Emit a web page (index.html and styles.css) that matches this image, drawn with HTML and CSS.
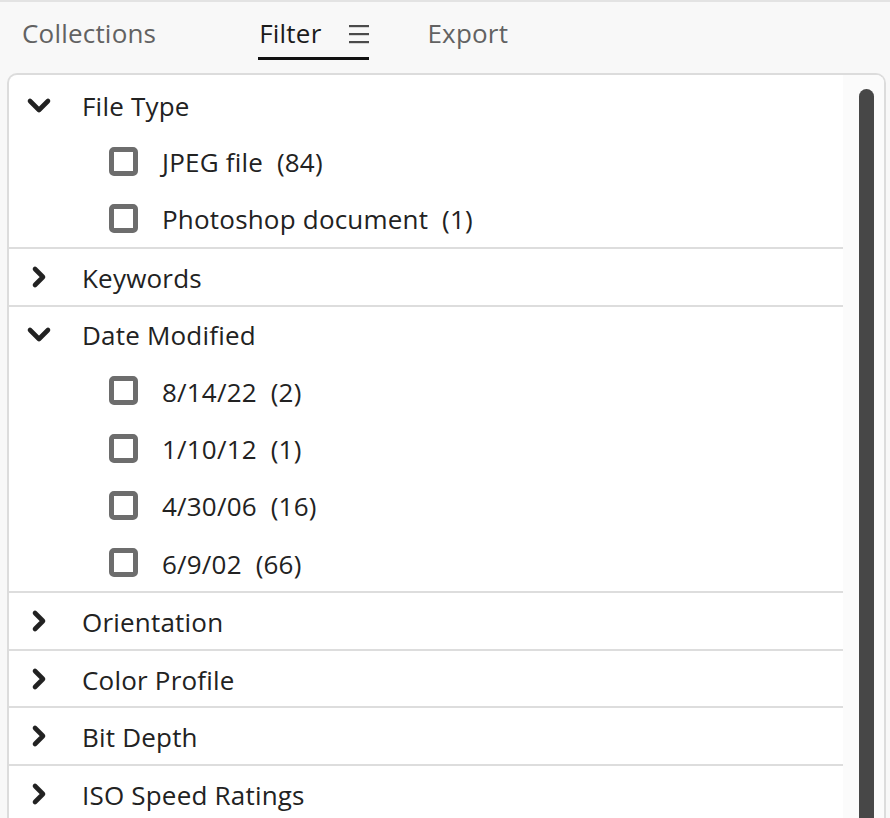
FILE: index.html
```html
<!DOCTYPE html>
<html lang="en">
<head>
<meta charset="utf-8">
<title>Filter</title>
<link rel="stylesheet" href="styles.css">
</head>
<body>
<div class="app">
  <nav class="tabs">
    <div class="tab tab-muted tab-collections">Collections</div>
    <div class="tab tab-active">
      <span>Filter</span>
      <svg class="menu-icon" width="20" height="20" viewBox="0 0 20 20" aria-hidden="true">
        <rect x="0" y="1" width="20" height="2.2" fill="#4b4b4b"/>
        <rect x="0" y="9" width="20" height="2.2" fill="#4b4b4b"/>
        <rect x="0" y="17" width="20" height="2.2" fill="#4b4b4b"/>
      </svg>
    </div>
    <div class="tab tab-muted tab-export">Export</div>
  </nav>

  <section class="panel">
    <div class="list">
      <div class="group">
        <div class="header">
          <svg class="chev" width="26" height="26" viewBox="0 0 26 26"><path d="M4 9 L13 18 L22 9" /></svg>
          <span class="title">File Type</span>
        </div>
        <div class="item"><span class="box"></span><span class="label">JPEG file&nbsp; (84)</span></div>
        <div class="item"><span class="box"></span><span class="label">Photoshop document&nbsp; (1)</span></div>
      </div>
      <div class="group">
        <div class="header">
          <svg class="chev" width="26" height="26" viewBox="0 0 26 26"><path d="M9 5 L17 13 L9 21" /></svg>
          <span class="title">Keywords</span>
        </div>
      </div>
      <div class="group">
        <div class="header">
          <svg class="chev" width="26" height="26" viewBox="0 0 26 26"><path d="M4 9 L13 18 L22 9" /></svg>
          <span class="title">Date Modified</span>
        </div>
        <div class="item"><span class="box"></span><span class="label">8/14/22&nbsp; (2)</span></div>
        <div class="item"><span class="box"></span><span class="label">1/10/12&nbsp; (1)</span></div>
        <div class="item"><span class="box"></span><span class="label">4/30/06&nbsp; (16)</span></div>
        <div class="item"><span class="box"></span><span class="label">6/9/02&nbsp; (66)</span></div>
      </div>
      <div class="group">
        <div class="header">
          <svg class="chev" width="26" height="26" viewBox="0 0 26 26"><path d="M9 5 L17 13 L9 21" /></svg>
          <span class="title">Orientation</span>
        </div>
      </div>
      <div class="group">
        <div class="header">
          <svg class="chev" width="26" height="26" viewBox="0 0 26 26"><path d="M9 5 L17 13 L9 21" /></svg>
          <span class="title">Color Profile</span>
        </div>
      </div>
      <div class="group">
        <div class="header">
          <svg class="chev" width="26" height="26" viewBox="0 0 26 26"><path d="M9 5 L17 13 L9 21" /></svg>
          <span class="title">Bit Depth</span>
        </div>
      </div>
      <div class="group">
        <div class="header">
          <svg class="chev" width="26" height="26" viewBox="0 0 26 26"><path d="M9 5 L17 13 L9 21" /></svg>
          <span class="title">ISO Speed Ratings</span>
        </div>
      </div>
    </div>
    <div class="track"><div class="thumb"></div></div>
  </section>
</div>
</body>
</html>
```

FILE: styles.css
```css
html, body {
  margin: 0;
  padding: 0;
  height: 100%;
  overflow: hidden;
}

body {
  background: #f8f8f8;
  font-family: "Open Sans", "Liberation Sans", sans-serif;
  color: #222222;
  letter-spacing: 0.2px;
}

.app {
  border-top: 2px solid #e3e3e3;
  height: 100%;
  box-sizing: border-box;
  display: flex;
  flex-direction: column;
}

.tabs {
  display: flex;
  align-items: flex-start;
  padding-left: 22px;
  height: 58px;
  margin-bottom: 13px;
}

.tab {
  font-size: 26px;
  line-height: 32px;
  padding-top: 15px;
  height: 58px;
  box-sizing: border-box;
  white-space: nowrap;
}

.tab-muted {
  color: #626262;
}

.tab-collections {
  margin-right: 102px;
}

.tab-active {
  color: #1b1b1b;
  display: flex;
  align-items: flex-start;
  gap: 28px;
  border-bottom: 3px solid #111111;
  padding-left: 1px;
  margin-right: 58px;
}

.menu-icon {
  margin-top: 7px;
}

.panel {
  flex: 1;
  margin-left: 7px;
  margin-right: 4px;
  border: 2px solid #dcdcdc;
  border-bottom: none;
  border-radius: 10px 10px 0 0;
  background: #ffffff;
  display: flex;
  overflow: hidden;
  min-height: 0;
}

.list {
  flex: 1;
  padding-top: 2px;
}

.group {
  border-bottom: 2px solid #dddddd;
}

.header {
  height: 55.5px;
  display: flex;
  align-items: center;
  padding-left: 17px;
  font-size: 26px;
  color: #222222;
}

.title {
  padding-top: 2px;
}

.chev {
  margin-right: 30px;
  flex: none;
}

.chev path {
  fill: none;
  stroke: #222222;
  stroke-width: 4.6;
  stroke-linecap: round;
  stroke-linejoin: round;
}

.item {
  height: 57.3px;
  display: flex;
  align-items: center;
  padding-left: 100px;
  font-size: 26px;
  color: #222222;
}

.box {
  width: 29px;
  height: 29px;
  box-sizing: border-box;
  border: 5px solid #6d6d6d;
  border-radius: 5px;
  margin-right: 24px;
  flex: none;
}

.label {
  white-space: nowrap;
  padding-top: 2px;
}

.track {
  width: 41px;
  flex: none;
  background: #fbfbfb;
  padding-top: 14px;
  padding-left: 16px;
  box-sizing: border-box;
}

.thumb {
  width: 15px;
  height: 900px;
  background: #474747;
  border-radius: 8px 8px 0 0;
}
```
